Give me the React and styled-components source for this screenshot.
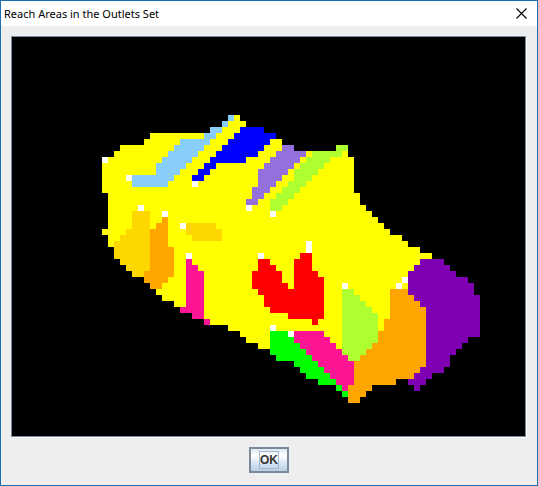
import React from 'react';
import styled, { createGlobalStyle } from 'styled-components';

const GlobalStyle = createGlobalStyle`
  *, *::before, *::after { box-sizing: border-box; }
  body { margin: 0; background: #eeeeee; }
`;

const Dialog = styled.section`
  display: flex;
  flex-direction: column;
  min-height: 100vh;
  border: 1px solid #1a6fb5;
  background: #eeeeee;
`;

const TitleBar = styled.header`
  display: flex;
  align-items: center;
  justify-content: space-between;
  height: 25px;
  padding-left: 3px;
  background: #ffffff;
`;

const Title = styled.h1`
  margin: 0;
  font: 400 11px/16px 'Noto Sans', 'Open Sans', sans-serif;
  color: #000000;
`;

const CloseButton = styled.button`
  display: flex;
  align-items: center;
  padding: 7px 10px;
  border: 0;
  background: transparent;
`;

const Content = styled.main`
  display: flex;
  flex: 1;
  flex-direction: column;
  align-items: center;
  gap: 10px;
  padding: 10px 10px 11px;
`;

const MapPanel = styled.div`
  align-self: stretch;
  border: 1px solid #7a8a99;
  box-shadow: 1px 1px 0 #ffffff;
  background: #000000;
  margin-right: 1px;
`;

const MapDrawing = styled.svg`
  display: block;
  width: 100%;
  height: auto;
`;

const OkButton = styled.button`
  padding: 2px 8px;
  border: 2px solid #7a8a99;
  background: linear-gradient(#dde8f3 0%, #ffffff 30%, #dde8f3 60%, #b8cfe5 100%);
  font: 700 12px/16px 'Liberation Sans', Arial, sans-serif;
  color: #333333;
`;

const FocusFrame = styled.span`
  display: block;
  border: 1px solid #a3b8cc;
`;

const COLORS = {
  W: '#ffffff',
  Y: '#ffff00',
  L: '#87cefa',
  B: '#0000ff',
  M: '#9370db',
  G: '#adff2f',
  D: '#ffd700',
  O: '#ffa500',
  K: '#ff1493',
  R: '#ff0000',
  P: '#7f00b2',
  N: '#00ff00',
};

// One line per raster row: a colour key with the column where its run starts;
// a dot closes the run before it.
const FIRST_ROW = 19;
const ROWS = `
L38 Y39 .40
L37 Y38 .41
L35 Y37 B40 .44
Y25 L34 Y36 B39 .46
Y24 L30 Y35 B38 Y45 .47
Y20 L29 Y34 B37 Y44 M47 .49 G56 .58
Y19 L28 Y33 B36 Y43 M46 Y51 G52 Y57 .58
W17 Y18 L27 Y32 B35 Y41 M45 Y50 G51 Y55 .59
Y17 L26 Y31 B34 Y36 M44 Y49 G50 Y54 .59
Y17 L26 Y30 B33 Y35 M43 Y48 G49 Y53 .59
Y17 W21 L22 Y29 B32 Y34 M43 Y47 G49 Y52 .59
Y17 L22 Y28 W32 Y33 M43 Y46 G48 Y51 .59
Y17 M42 Y45 G47 Y50 .59
Y18 M42 Y44 G46 Y49 .60
Y18 M41 Y43 G45 Y48 .60
Y18 W23 Y24 W41 Y42 G45 Y47 .61
Y18 D22 Y25 W27 Y28 W45 Y46 .62
Y18 D22 Y25 O27 Y28 .63
Y18 D22 Y25 O26 Y28 W30 D31 Y36 .64
Y17 D21 O25 Y28 D31 Y37 .65
Y18 D20 O25 Y28 D32 Y37 .67
Y18 D19 O25 Y28 W51 Y52 .68
D19 O25 Y29 W51 Y52 .70
D19 O25 Y29 W31 Y32 W43 Y44 R50 Y52 .72
D20 O25 Y29 K31 Y32 R43 Y45 R49 Y52 P70 .74
D21 O25 Y29 K31 Y33 R43 Y46 R49 Y52 P69 .75
D22 O24 Y29 K31 Y34 R42 Y47 R49 Y53 P68 .76
O24 Y28 K31 Y34 R42 Y47 R49 Y54 W67 P68 .78
O25 Y27 K31 Y34 R42 Y48 R49 Y54 W57 Y58 W66 Y67 P68 .79
Y26 K31 Y34 R43 Y54 G57 Y59 O65 P68 .79
Y27 K31 Y34 R44 Y54 G57 Y60 O65 P69 .80
Y29 K31 Y34 R44 Y54 G57 Y61 O65 P70 .80
K30 Y34 R45 Y54 G57 Y62 O65 P71 .80
K32 Y34 R48 Y54 G57 Y63 O65 P71 .80
K34 Y35 R52 Y53 G57 Y63 O64 P71 .80
Y38 W45 Y46 G57 Y63 O64 P71 .80
Y40 N45 W48 K49 Y54 G57 O63 P71 .80
Y41 N45 K49 Y55 G57 O63 P71 .78
Y43 N45 K50 Y56 G57 O62 P71 .77
N45 K51 G57 O61 P71 .76
N46 K52 G58 O60 P71 .75
N49 K53 O59 P71 .75
N50 K54 O59 P70 .74
N51 K55 O59 P69 .72
N53 K56 O59 .66 P68 .71
N56 K57 O58 .62 P69 .70
N57 O58 .61
O58 .60
`.trim().split('\n');

function buildAreas() {
  const areas = {};
  ROWS.forEach((line, index) => {
    const marks = line.split(' ').map((mark) => [mark[0], Number(mark.slice(1))]);
    marks.forEach(([key, start], i) => {
      if (key === '.') return;
      const length = marks[i + 1][1] - start;
      areas[key] = (areas[key] || '') + `M${start} ${FIRST_ROW + index}h${length}v1h-${length}z`;
    });
  });
  return Object.entries(areas);
}

const AREAS = buildAreas();

function ReachMap() {
  return (
    <MapPanel>
      <MapDrawing viewBox="2 6 85.5 66.5" shapeRendering="crispEdges" role="img" aria-label="Reach areas">
        {AREAS.map(([key, d]) => (
          <path key={key} d={d} fill={COLORS[key]} />
        ))}
      </MapDrawing>
    </MapPanel>
  );
}

export default function App() {
  return (
    <>
      <GlobalStyle />
      <Dialog role="dialog" aria-labelledby="dialog-title">
        <TitleBar>
          <Title id="dialog-title">Reach Areas in the Outlets Set</Title>
          <CloseButton type="button" aria-label="Close">
            <svg width="11" height="11" viewBox="0 0 11 11" fill="none" stroke="#000000" strokeWidth="1.1">
              <path d="M0.5 0.5L10.5 10.5M10.5 0.5L0.5 10.5" />
            </svg>
          </CloseButton>
        </TitleBar>
        <Content>
          <ReachMap />
          <OkButton type="button">
            <FocusFrame>OK</FocusFrame>
          </OkButton>
        </Content>
      </Dialog>
    </>
  );
}
